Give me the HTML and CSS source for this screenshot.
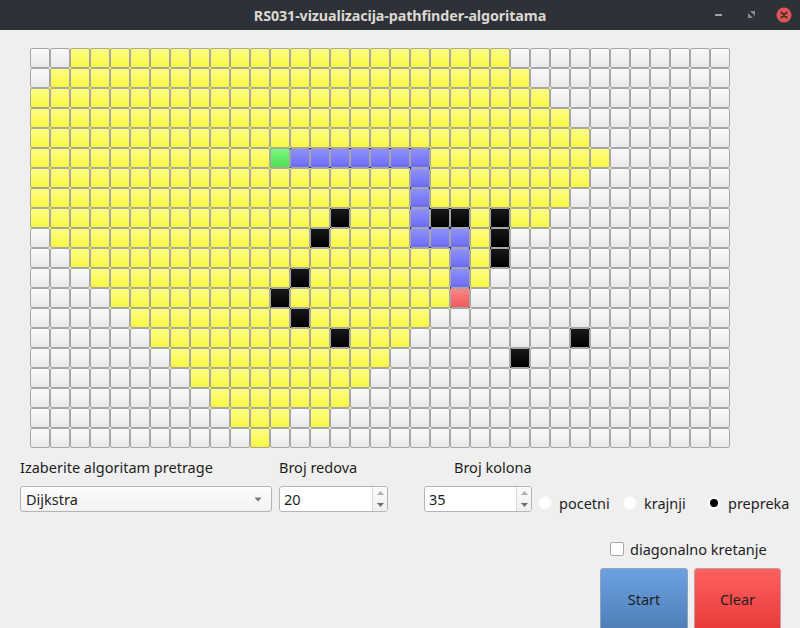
FILE: index.html
```html
<!DOCTYPE html>
<html lang="sr">
<head>
<meta charset="utf-8">
<title>RS031-vizualizacija-pathfinder-algoritama</title>
<link rel="stylesheet" href="styles.css">
</head>
<body>
<div class="window">
  <header class="titlebar">
    <div class="title">RS031-vizualizacija-pathfinder-algoritama</div>
    <div class="wm">
      <svg class="wm-min" width="8" height="8" viewBox="0 0 8 8"><rect x="0" y="3" width="7" height="2" fill="#a3a3a3"/></svg>
      <svg class="wm-max" width="9" height="9" viewBox="0 0 9 9"><path d="M3 1 H8 V6 Z" fill="#8c8c8c"/><path d="M1 3 V8 H6 Z" fill="#8c8c8c"/></svg>
      <svg class="wm-close" width="16" height="16" viewBox="0 0 16 16"><circle cx="8" cy="8" r="7.5" fill="#df5552"/><path d="M5.3 5.3 L10.7 10.7 M10.7 5.3 L5.3 10.7" stroke="#3a2a2c" stroke-width="1.7" stroke-linecap="round"/></svg>
    </div>
  </header>
  <main class="content">
    <div class="grid" id="grid"></div>

    <div class="labels">
      <span class="label label-algo">Izaberite algoritam pretrage</span>
      <span class="label label-rows">Broj redova</span>
      <span class="label label-cols">Broj kolona</span>
    </div>

    <div class="inputs">
      <div class="combo">
        <span class="combo-text">Dijkstra</span>
        <svg class="combo-arrow" width="8" height="5" viewBox="0 0 8 5"><path d="M0.5 0.5 H7.5 L4 4.5 Z" fill="#767676"/></svg>
      </div>
      <div class="spin spin-rows">
        <span class="spin-value">20</span>
        <span class="spin-arrows">
          <span class="spin-btn"><svg width="7" height="4" viewBox="0 0 7 4"><path d="M0 4 L3.5 0 L7 4 Z" fill="#b0b0b0"/></svg></span>
          <span class="spin-btn"><svg width="7" height="4" viewBox="0 0 7 4"><path d="M0 0 L7 0 L3.5 4 Z" fill="#6e6e6e"/></svg></span>
        </span>
      </div>
      <div class="spin spin-cols">
        <span class="spin-value">35</span>
        <span class="spin-arrows">
          <span class="spin-btn"><svg width="7" height="4" viewBox="0 0 7 4"><path d="M0 4 L3.5 0 L7 4 Z" fill="#b0b0b0"/></svg></span>
          <span class="spin-btn"><svg width="7" height="4" viewBox="0 0 7 4"><path d="M0 0 L7 0 L3.5 4 Z" fill="#6e6e6e"/></svg></span>
        </span>
      </div>
      <div class="radios">
        <label class="radio radio-start"><span class="radio-dot"></span>pocetni</label>
        <label class="radio radio-end"><span class="radio-dot"></span>krajnji</label>
        <label class="radio radio-wall"><span class="radio-dot checked"></span>prepreka</label>
      </div>
    </div>

    <div class="options">
      <span class="checkbox"></span>
      <span class="option-text">diagonalno kretanje</span>
    </div>

    <div class="actions">
      <button class="btn btn-start">Start</button>
      <button class="btn btn-clear">Clear</button>
    </div>
  </main>
</div>
<script src="script.js"></script>
</body>
</html>
```

FILE: styles.css
```css
html, body {
  margin: 0;
  padding: 0;
}
body {
  width: 800px;
  height: 628px;
  overflow: hidden;
  background: #efefef;
  font-family: "Noto Sans", "DejaVu Sans", sans-serif;
  font-size: 14.5px;
  color: #1e1e1e;
}
.window {
  display: flex;
  flex-direction: column;
  height: 628px;
}
.titlebar {
  height: 30px;
  flex: 0 0 30px;
  background: #2f3139;
  display: grid;
  grid-template-columns: 1fr auto 1fr;
  align-items: center;
}
.title {
  grid-column: 2;
  color: #dcd8d0;
  font-weight: bold;
  font-size: 14.3px;
  letter-spacing: -0.1px;
}
.wm {
  grid-column: 3;
  justify-self: end;
  display: flex;
  align-items: center;
  padding-right: 8px;
}
.wm-min {
  margin-right: 24px;
}
.wm-max {
  margin-right: 20px;
  margin-top: -1px;
}
.content {
  flex: 1;
  display: flex;
  flex-direction: column;
}
.grid {
  display: grid;
  grid-template-columns: repeat(35, 20px);
  grid-auto-rows: 20px;
  width: 700px;
  margin: 18px 0 0 30px;
}
.cell {
  background: var(--corner);
}
.cell::before {
  content: "";
  display: block;
  height: 100%;
  box-sizing: border-box;
  border: 1px solid #a6a6a6;
  border-radius: 2px;
  background: var(--fill);
}
.c-empty {
  --corner: #f2f2f2;
  --fill: linear-gradient(#fafafa, #e9e9e9);
}
.c-visited {
  --corner: #ffff00;
  --fill: linear-gradient(#ffff84, #f7f744);
}
.c-path {
  --corner: #0000ff;
  --fill: linear-gradient(#9090ff, #6c6cf4);
}
.c-start {
  --corner: #00ff00;
  --fill: linear-gradient(#7cf67c, #50e050);
}
.c-end {
  --corner: #ff0000;
  --fill: linear-gradient(#ff8686, #ef5a5a);
}
.c-wall {
  --corner: #000000;
  --fill: linear-gradient(#181818, #000000);
}

.labels {
  display: flex;
  height: 18px;
  line-height: 18px;
  margin-top: 10px;
  padding-left: 20px;
}
.label-algo { width: 259px; }
.label-rows { width: 175px; }

.inputs {
  display: flex;
  align-items: center;
  height: 26px;
  margin-top: 10px;
  padding-left: 20px;
}
.combo {
  box-sizing: border-box;
  width: 252px;
  height: 26px;
  border: 1px solid #b4b4b4;
  border-radius: 3px;
  background: linear-gradient(#fdfdfd, #f1f1f1);
  display: flex;
  align-items: center;
  padding: 0 6px 0 5px;
}
.combo-text {
  flex: 1;
}
.combo-arrow {
  margin-right: 3px;
}
.spin {
  box-sizing: border-box;
  height: 26px;
  border: 1px solid #b4b4b4;
  border-radius: 3px;
  background: #ffffff;
  display: flex;
  align-items: stretch;
}
.spin-rows {
  width: 109px;
  margin-left: 7px;
}
.spin-cols {
  width: 108px;
  margin-left: 36px;
}
.spin-value {
  flex: 1;
  display: flex;
  align-items: center;
  padding-left: 4px;
}
.spin-arrows {
  width: 14px;
  border-left: 1px solid #dadada;
  display: flex;
  flex-direction: column;
  background: linear-gradient(#fbfbfb, #efefef);
  border-radius: 0 2px 2px 0;
}
.spin-btn {
  flex: 1;
  display: flex;
  align-items: center;
  justify-content: center;
}
.radios {
  display: flex;
  align-items: center;
  padding-top: 8px;
  margin-left: 6px;
}
.radio {
  display: flex;
  align-items: center;
}
.radio-start { width: 85px; }
.radio-end { width: 84px; }
.radio-dot {
  box-sizing: border-box;
  width: 14px;
  height: 14px;
  border-radius: 50%;
  background: #ffffff;
  border: 1px solid #f4f4f4;
  margin-right: 7px;
  display: flex;
  align-items: center;
  justify-content: center;
}
.radio-dot.checked::after {
  content: "";
  width: 8px;
  height: 8px;
  border-radius: 50%;
  background: #000000;
}

.options {
  display: flex;
  align-items: center;
  height: 14px;
  margin-top: 30px;
  padding-left: 610px;
}
.checkbox {
  box-sizing: border-box;
  width: 14px;
  height: 14px;
  border: 1px solid #a8a8a8;
  border-radius: 2px;
  background: #ffffff;
  margin-right: 6px;
}

.actions {
  display: flex;
  gap: 6px;
  margin-top: 12px;
  padding-left: 600px;
}
.btn {
  height: 66px;
  border: 1px solid #a0a0a0;
  border-radius: 3px;
  font-family: inherit;
  font-size: 14.5px;
  color: #1e1e1e;
  padding: 0 0 4px 0;
}
.btn-start {
  width: 88px;
  background: linear-gradient(#6ca1e2, #4d7cb4);
  border-color: #8ea2bb;
}
.btn-clear {
  width: 87px;
  background: linear-gradient(#ff6060, #e83838);
  border-color: #c79a9a;
}
```

FILE: script.js
```js
var rows = [
  "2W22Y11W",
  "1W24Y10W",
  "26Y9W",
  "27Y8W",
  "28Y7W",
  "12Y1G7B9Y6W",
  "19Y1B8Y7W",
  "19Y1B7Y8W",
  "15Y1K3Y1B2K1Y1K2Y9W",
  "1W13Y1K4Y3B1Y1K11W",
  "2W19Y1B1Y1K11W",
  "3W10Y1K7Y1B1Y12W",
  "4W8Y1K8Y1R13W",
  "5W8Y1K6Y15W",
  "6W9Y1K3Y8W1K7W",
  "7W11Y6W1K10W",
  "8W9Y18W",
  "9W7Y19W",
  "10W3Y1W1Y20W",
  "11W1Y23W"
];
var kinds = { W: "c-empty", Y: "c-visited", B: "c-path", G: "c-start", R: "c-end", K: "c-wall" };
var grid = document.getElementById("grid");
rows.forEach(function (row) {
  var re = /(\d+)([A-Z])/g, m;
  while ((m = re.exec(row)) !== null) {
    for (var i = 0; i < parseInt(m[1], 10); i++) {
      var d = document.createElement("div");
      d.className = "cell " + kinds[m[2]];
      grid.appendChild(d);
    }
  }
});
```
